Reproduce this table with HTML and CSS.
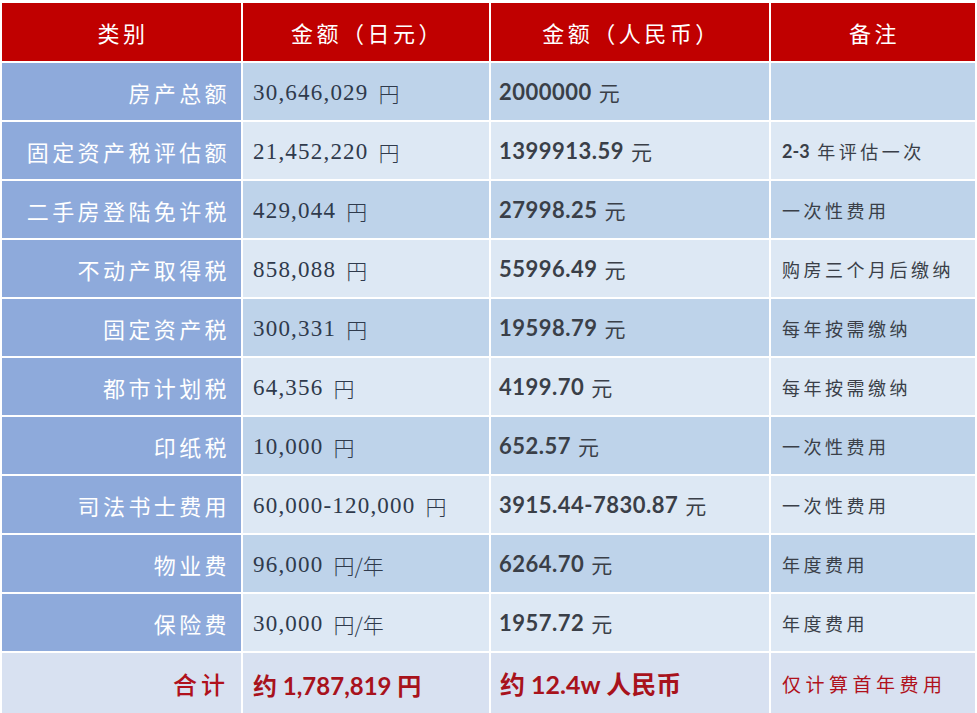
FILE: index.html
```html
<!DOCTYPE html>
<html lang="zh-CN">
<head>
<meta charset="utf-8">
<title>购房费用</title>
<link rel="stylesheet" href="styles.css">
</head>
<body>
<div class="sheet">
  <div class="hd">类别</div>
  <div class="hd">金额（日元）</div>
  <div class="hd">金额（人民币）</div>
  <div class="hd">备注</div>

  <div class="c1">房产总额</div>
  <div class="c2 dk">30,646,029 <span class="cj">円</span></div>
  <div class="c3 dk">2000000 <span class="cj">元</span></div>
  <div class="c4 dk"></div>

  <div class="c1">固定资产税评估额</div>
  <div class="c2 lt">21,452,220 <span class="cj">円</span></div>
  <div class="c3 lt">1399913.59 <span class="cj">元</span></div>
  <div class="c4 lt"><b class="num">2-3</b>&nbsp;年评估一次</div>

  <div class="c1">二手房登陆免许税</div>
  <div class="c2 dk">429,044 <span class="cj">円</span></div>
  <div class="c3 dk">27998.25 <span class="cj">元</span></div>
  <div class="c4 dk">一次性费用</div>

  <div class="c1">不动产取得税</div>
  <div class="c2 lt">858,088 <span class="cj">円</span></div>
  <div class="c3 lt">55996.49 <span class="cj">元</span></div>
  <div class="c4 lt">购房三个月后缴纳</div>

  <div class="c1">固定资产税</div>
  <div class="c2 dk">300,331 <span class="cj">円</span></div>
  <div class="c3 dk">19598.79 <span class="cj">元</span></div>
  <div class="c4 dk">每年按需缴纳</div>

  <div class="c1">都市计划税</div>
  <div class="c2 lt">64,356 <span class="cj">円</span></div>
  <div class="c3 lt">4199.70 <span class="cj">元</span></div>
  <div class="c4 lt">每年按需缴纳</div>

  <div class="c1">印纸税</div>
  <div class="c2 dk">10,000 <span class="cj">円</span></div>
  <div class="c3 dk">652.57 <span class="cj">元</span></div>
  <div class="c4 dk">一次性费用</div>

  <div class="c1">司法书士费用</div>
  <div class="c2 lt">60,000-120,000 <span class="cj">円</span></div>
  <div class="c3 lt">3915.44-7830.87 <span class="cj">元</span></div>
  <div class="c4 lt">一次性费用</div>

  <div class="c1">物业费</div>
  <div class="c2 dk">96,000 <span class="cj">円/年</span></div>
  <div class="c3 dk">6264.70 <span class="cj">元</span></div>
  <div class="c4 dk">年度费用</div>

  <div class="c1">保险费</div>
  <div class="c2 lt">30,000 <span class="cj">円/年</span></div>
  <div class="c3 lt">1957.72 <span class="cj">元</span></div>
  <div class="c4 lt">年度费用</div>

  <div class="c1 tot">合计</div>
  <div class="c2 tot totb">约 1,787,819 円</div>
  <div class="c3 tot totb">约 12.4w 人民币</div>
  <div class="c4 tot totn">仅计算首年费用</div>
</div>
</body>
</html>
```

FILE: styles.css
```css
html, body {
  margin: 0;
  padding: 0;
  background: #ffffff;
}
body {
  width: 977px;
  height: 713px;
  overflow: hidden;
  font-family: "Noto Sans CJK SC", "Noto Sans", sans-serif;
}
.sheet {
  display: grid;
  grid-template-columns: 239px 246px 278px 204px;
  grid-template-rows: 58px;
  grid-auto-rows: 57px;
  column-gap: 2px;
  row-gap: 2px;
  padding: 3px 0 0 2px;
}
.sheet > div {
  display: flex;
  align-items: center;
  white-space: nowrap;
  box-sizing: border-box;
}
.hd {
  background: #c00000;
  color: #ffffff;
  justify-content: center;
  font-size: 22px;
  letter-spacing: 3.5px;
  padding-left: 3px;
}
.c1 {
  background: #8eaadb;
  color: #ffffff;
  justify-content: flex-end;
  font-size: 22px;
  font-weight: 400;
  letter-spacing: 3.4px;
  padding-right: 11px;
}
.dk { background: #bed3ea; }
.lt { background: #dde8f4; }
.c2 {
  color: #2f3a4c;
  font-family: "Liberation Serif", "Noto Sans CJK SC", serif;
  font-size: 23px;
  letter-spacing: 1.2px;
  padding-left: 10px;
  padding-top: 2px;
}
.c2 .cj {
  font-family: "Noto Sans CJK SC", sans-serif;
  font-weight: 300;
  font-size: 21px;
  margin-left: 10px;
  letter-spacing: 0;
}
.c3 {
  color: #3a3f48;
  font-family: "Lato", "Noto Sans CJK SC", sans-serif;
  font-weight: 700;
  font-size: 22px;
  letter-spacing: 0.5px;
  padding-left: 8px;
}
.c3 .cj {
  font-family: "Noto Sans CJK SC", sans-serif;
  font-weight: 400;
  font-size: 21px;
  margin-left: 7px;
}
.c4 {
  color: #3a3f48;
  font-size: 18px;
  letter-spacing: 3.5px;
  padding-left: 11px;
}
.c4 .num {
  font-family: "Lato", sans-serif;
  font-weight: 700;
  letter-spacing: 0;
}
.tot {
  background: #d8e1f1;
  height: 60px;
}
.c1.tot {
  color: #b0111c;
  font-size: 24px;
  font-weight: 500;
  letter-spacing: 4px;
  padding-right: 12px;
}
.totb {
  color: #a8121c;
  font-family: "Lato", "Noto Sans CJK SC", sans-serif;
  font-weight: 700;
  font-size: 24px;
  letter-spacing: 0;
}
.c3.totb {
  font-size: 25px;
  padding-left: 9px;
}
.totn {
  color: #b0111c;
  font-size: 19px;
  letter-spacing: 4.5px;
}
```
